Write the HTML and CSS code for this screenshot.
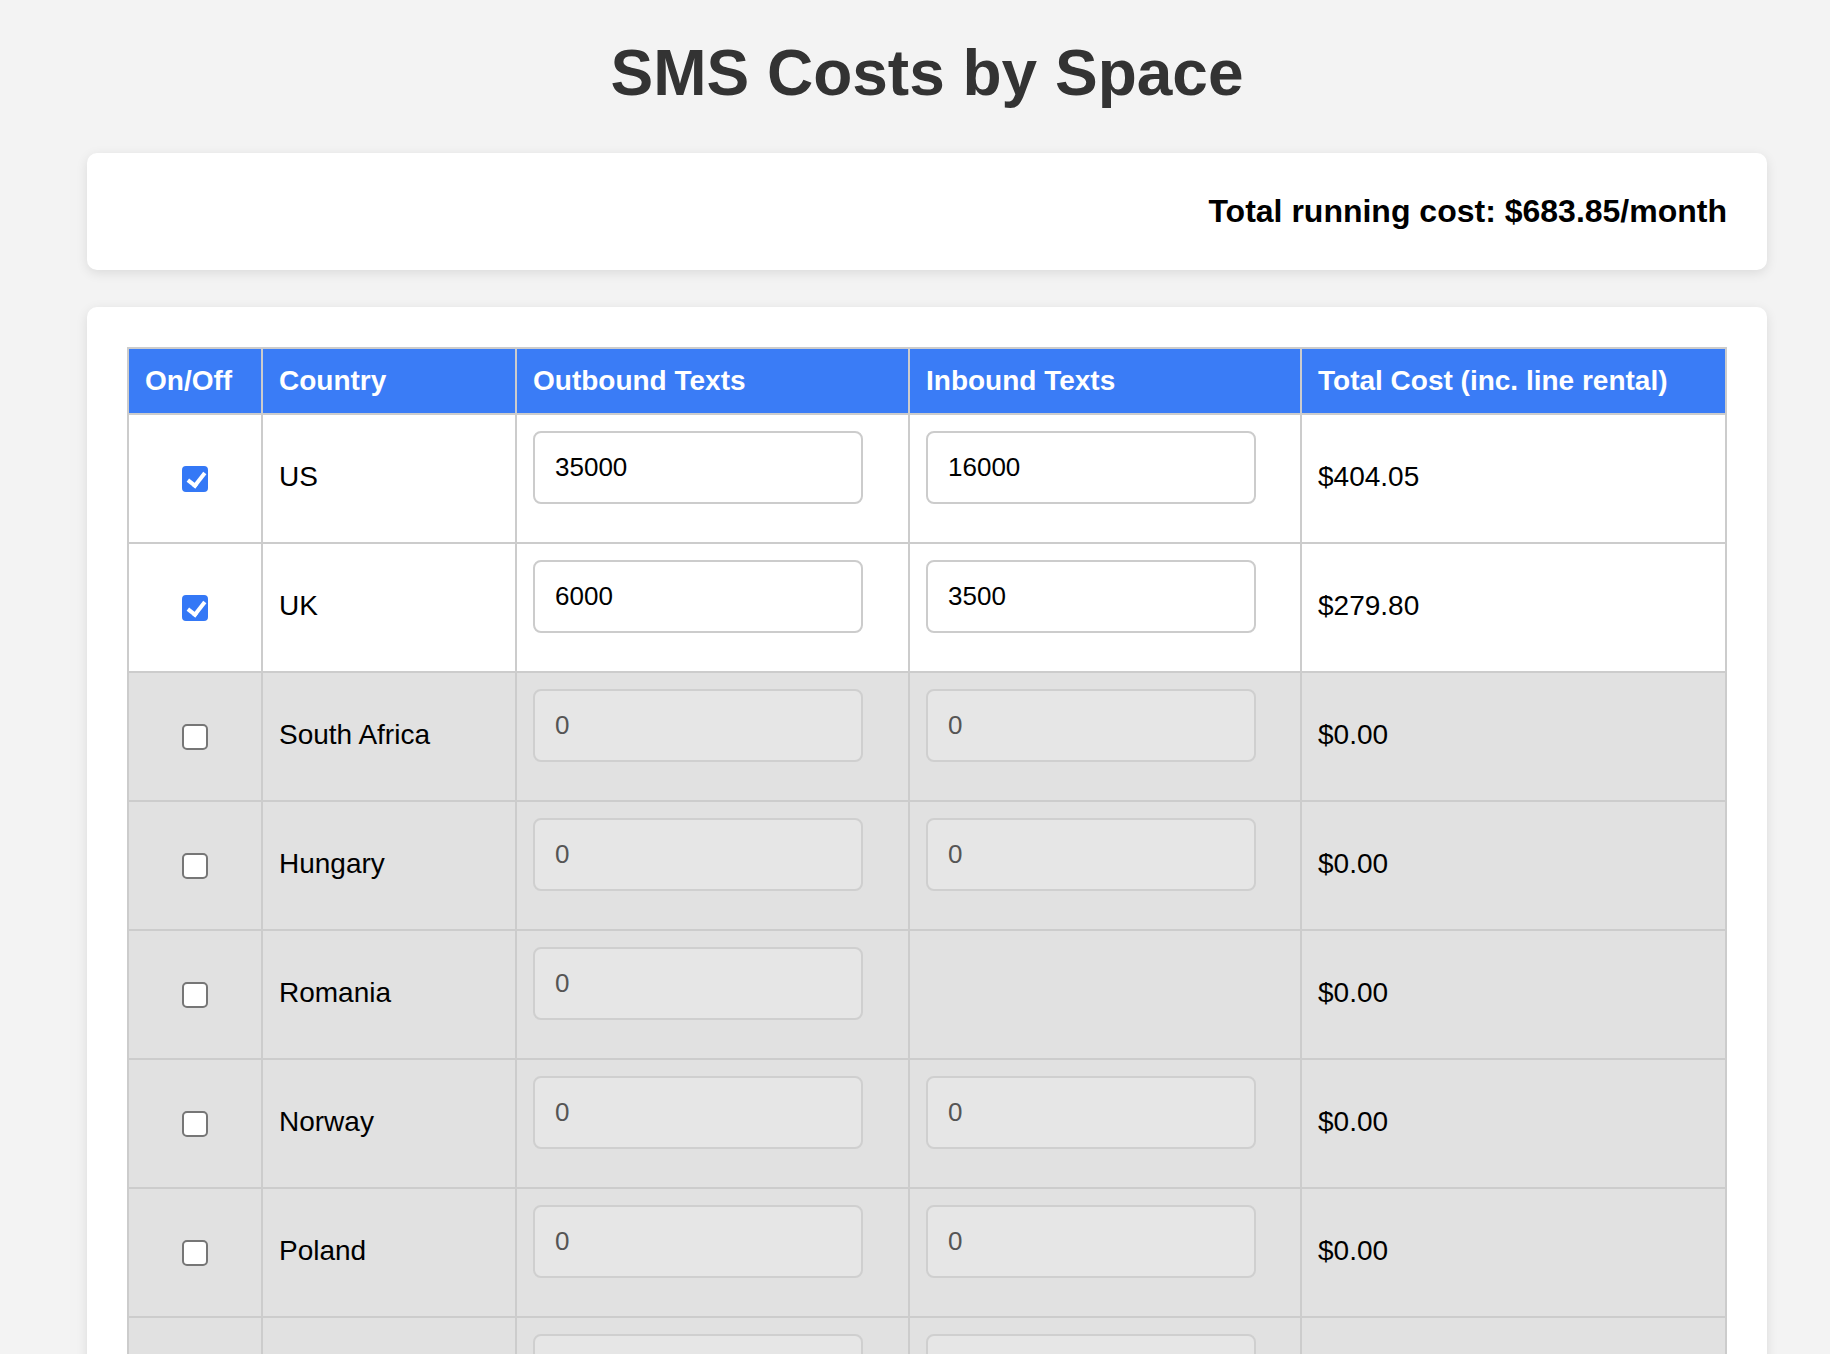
FILE: index.html
```html
<!DOCTYPE html>
<html lang="en">
<head>
<meta charset="utf-8">
<title>SMS Costs by Space</title>
<link rel="stylesheet" href="styles.css">
</head>
<body>
<div class="page">
  <h1 class="title">SMS Costs by Space</h1>

  <div class="card summary">
    <div class="total">Total running cost: $683.85/month</div>
  </div>

  <div class="card">
    <table class="sms-table">
      <colgroup>
        <col class="c-onoff">
        <col class="c-country">
        <col class="c-out">
        <col class="c-in">
        <col class="c-total">
      </colgroup>
      <thead>
        <tr>
          <th>On/Off</th>
          <th>Country</th>
          <th>Outbound Texts</th>
          <th>Inbound Texts</th>
          <th>Total Cost (inc. line rental)</th>
        </tr>
      </thead>
      <tbody>
        <tr class="on">
          <td class="toggle"><input type="checkbox" class="check" checked></td>
          <td>US</td>
          <td class="field"><input type="text" class="num" value="35000"></td>
          <td class="field"><input type="text" class="num" value="16000"></td>
          <td>$404.05</td>
        </tr>
        <tr class="on">
          <td class="toggle"><input type="checkbox" class="check" checked></td>
          <td>UK</td>
          <td class="field"><input type="text" class="num" value="6000"></td>
          <td class="field"><input type="text" class="num" value="3500"></td>
          <td>$279.80</td>
        </tr>
        <tr class="off">
          <td class="toggle"><input type="checkbox" class="check"></td>
          <td>South Africa</td>
          <td class="field"><input type="text" class="num" value="0" disabled></td>
          <td class="field"><input type="text" class="num" value="0" disabled></td>
          <td>$0.00</td>
        </tr>
        <tr class="off">
          <td class="toggle"><input type="checkbox" class="check"></td>
          <td>Hungary</td>
          <td class="field"><input type="text" class="num" value="0" disabled></td>
          <td class="field"><input type="text" class="num" value="0" disabled></td>
          <td>$0.00</td>
        </tr>
        <tr class="off">
          <td class="toggle"><input type="checkbox" class="check"></td>
          <td>Romania</td>
          <td class="field"><input type="text" class="num" value="0" disabled></td>
          <td class="field"></td>
          <td>$0.00</td>
        </tr>
        <tr class="off">
          <td class="toggle"><input type="checkbox" class="check"></td>
          <td>Norway</td>
          <td class="field"><input type="text" class="num" value="0" disabled></td>
          <td class="field"><input type="text" class="num" value="0" disabled></td>
          <td>$0.00</td>
        </tr>
        <tr class="off">
          <td class="toggle"><input type="checkbox" class="check"></td>
          <td>Poland</td>
          <td class="field"><input type="text" class="num" value="0" disabled></td>
          <td class="field"><input type="text" class="num" value="0" disabled></td>
          <td>$0.00</td>
        </tr>
        <tr class="off">
          <td class="toggle"><input type="checkbox" class="check"></td>
          <td>Sweden</td>
          <td class="field"><input type="text" class="num" value="0" disabled></td>
          <td class="field"><input type="text" class="num" value="0" disabled></td>
          <td>$0.00</td>
        </tr>
        <tr class="off">
          <td class="toggle"><input type="checkbox" class="check"></td>
          <td>Germany</td>
          <td class="field"><input type="text" class="num" value="0" disabled></td>
          <td class="field"><input type="text" class="num" value="0" disabled></td>
          <td>$0.00</td>
        </tr>
      </tbody>
    </table>
  </div>
</div>
</body>
</html>
```

FILE: styles.css
```css
html, body {
  margin: 0;
  padding: 0;
}

body {
  background: #f3f3f3;
  font-family: "Liberation Sans", Arial, Helvetica, sans-serif;
  font-size: 28px;
  color: #000;
}

.page {
  width: 1680px;
  margin-left: 87px;
  padding-top: 37px;
  padding-bottom: 40px;
}

.title {
  margin: 0 0 42px;
  font-size: 64px;
  line-height: 73.6px;
  font-weight: bold;
  color: #333;
  text-align: center;
}

.card {
  background: #fff;
  border-radius: 10px;
  box-shadow: 0 3px 12px rgba(0, 0, 0, 0.1);
  padding: 40px;
  margin-bottom: 37px;
}

.total {
  text-align: right;
  font-size: 32px;
  line-height: 37px;
  font-weight: bold;
}

.sms-table {
  width: calc(100% - 2px);
  border-collapse: collapse;
  table-layout: fixed;
  border: 2px solid #ccc;
}

.c-onoff { width: 134px; }
.c-country { width: 254px; }
.c-out { width: 393px; }
.c-in { width: 392px; }
.c-total { width: 425px; }

.sms-table th {
  background: #3a7cf6;
  color: #fff;
  font-weight: bold;
  text-align: left;
  padding: 16px 16px;
  line-height: 32px;
  border: 2px solid #ccc;
  white-space: nowrap;
}

.sms-table td {
  border: 2px solid #ccc;
  padding: 15px 16px 17px;
  height: 95px;
  vertical-align: middle;
  line-height: 32px;
}

.sms-table tr.off td {
  background: #e1e1e1;
}

.sms-table tr.on td {
  background: #fff;
}

.sms-table td.toggle {
  text-align: center;
  padding-left: 0;
  padding-right: 0;
}

.sms-table td.field {
  vertical-align: top;
  padding: 16px;
}

.num {
  display: block;
  box-sizing: border-box;
  width: 330px;
  height: 73px;
  margin: 0 0 22px;
  padding: 0 18px 0 20px;
  border: 2px solid #ccc;
  border-radius: 8px;
  background: #fff;
  font-family: "Liberation Sans", Arial, Helvetica, sans-serif;
  font-size: 26px;
  color: #000;
  outline: none;
}

.num:disabled {
  background: #e6e6e6;
  color: #555;
  border-color: #cfcfcf;
}

.check {
  -webkit-appearance: none;
  appearance: none;
  position: relative;
  display: inline-block;
  box-sizing: border-box;
  width: 26px;
  height: 26px;
  margin: 0;
  vertical-align: middle;
  border: 2.5px solid #767676;
  border-radius: 5px;
  background: #fff;
}

.check:checked {
  background: #3478f6;
  border-color: #3478f6;
  border-radius: 4px;
}

.check:checked::after {
  content: "";
  position: absolute;
  left: 7px;
  top: 1px;
  width: 7px;
  height: 14px;
  border-right: 4px solid #fff;
  border-bottom: 4px solid #fff;
  transform: rotate(38deg);
}
```
